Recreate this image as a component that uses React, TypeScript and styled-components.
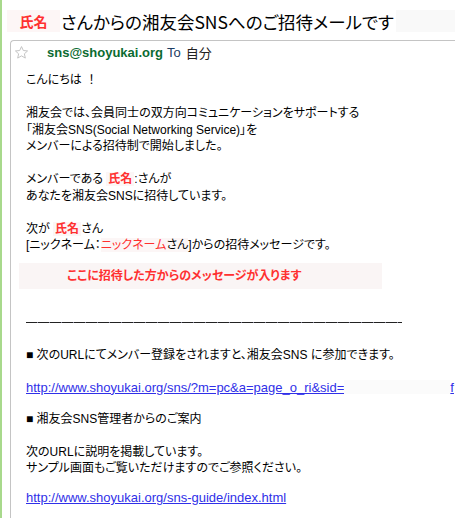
import React, { FC } from 'react';
import styled, { createGlobalStyle } from 'styled-components';

// === global === //
const GlobalStyle = createGlobalStyle`
  html, body { margin: 0; padding: 0; background: #fff; }
  body {
    font-family: "Liberation Sans", "Noto Sans CJK JP", sans-serif;
    font-feature-settings: "palt";
    color: #000;
  }
`;

const RED = '#ff3030';

// === star icon === //
const Star: FC = () => (
  <svg width="15" height="15" viewBox="0 0 24 24">
    <path
      d="M12 2.5l2.9 6.3 6.8.7-5.1 4.6 1.5 6.8L12 17.4l-6.1 3.5 1.5-6.8L2.3 9.5l6.8-.7z"
      fill="#fff"
      stroke="#c4c4c4"
      strokeWidth="1.6"
      strokeLinejoin="round"
    />
  </svg>
);

// === App === //
const App: FC = () => {
  return (
    <Page>
      <GlobalStyle />
      <GreenBar />
      <Main>
        <TitleRow>
          <NameLabel>氏名</NameLabel>
          <TitleText>さんからの湘友会SNSへのご招待メールです</TitleText>
          <TitleBlank />
        </TitleRow>

        <Card>
          <MailHead>
            <StarBox><Star /></StarBox>
            <Sender>sns@shoyukai.org</Sender>
            <ToLabel>To</ToLabel>
            <Me>自分</Me>
          </MailHead>

          <MailBody>
            <Para>こんにちは&nbsp;&nbsp;！</Para>
            <Para>
              湘友会では、会員同士の双方向コミュニケーションをサポートする<br />
              「湘友会SNS(Social Networking Service)」を<br />
              メンバーによる招待制で開始しました。
            </Para>
            <Para>
              メンバーである <Name>氏名</Name>:さんが<br />
              あなたを湘友会SNSに招待しています。
            </Para>
            <Para $gap={0}>
              次が <Name>氏名</Name>さん<br />
              [ニックネーム：<Hl><NameInline>ニックネーム</NameInline>さん</Hl>]からの招待メッセージです。
            </Para>

            <MessageBox>ここに招待した方からのメッセージが入ります</MessageBox>

            <Rule><RuleLine /></Rule>

            <Para>■ 次のURLにてメンバー登録をされますと、湘友会SNS に参加できます。</Para>
            <LinkLine $gap={14.5}>
              <Url href="#">
                http://www.shoyukai.org/sns/?m=pc&amp;a=page_o_ri&amp;sid=<Masked />f
              </Url>
            </LinkLine>
            <Para>■ 湘友会SNS管理者からのご案内</Para>
            <Para $gap={13.5}>
              次のURLに説明を掲載しています。<br />
              サンプル画面もご覧いただけますのでご参照ください。
            </Para>
            <LinkLine $gap={0}>
              <Url href="#">http://www.shoyukai.org/sns-guide/index.html</Url>
            </LinkLine>
          </MailBody>
        </Card>
      </Main>
    </Page>
  );
};

// === style === //
const Page = styled.div`
  display: flex;
  width: 455px;
  height: 518px;
  overflow: hidden;
`;

const GreenBar = styled.div`
  flex: 0 0 2px;
  background: #a8d98c;
`;

const Main = styled.div`
  flex: 1;
  min-width: 0;
  padding-top: 10px;
`;

const TitleRow = styled.div`
  display: flex;
  align-items: stretch;
  height: 22px;
  margin-left: 5px;
`;

const NameLabel = styled.div`
  flex: 0 0 53px;
  display: flex;
  align-items: center;
  justify-content: center;
  background: #fdf6f6;
  color: ${RED};
  font-size: 14px;
  font-weight: 700;
  font-family: "Noto Sans CJK JP", sans-serif;
`;

const TitleText = styled.div`
  flex: 0 0 335px;
  display: flex;
  align-items: center;
  padding-left: 1px;
  font-size: 17.5px;
  font-family: "Noto Sans CJK JP", sans-serif;
  white-space: nowrap;
  overflow: hidden;
`;

const TitleBlank = styled.div`
  flex: 1;
  background: #f9f9f9;
`;

const Card = styled.div`
  margin: 8px 0 0 8px;
  border-left: 1px solid #c4c4c4;
  border-top: 1px solid #c4c4c4;
  border-top-left-radius: 4px;
  height: 600px;
`;

const MailHead = styled.div`
  display: flex;
  align-items: center;
  height: 18px;
  padding-top: 2px;
  font-size: 13px;
`;

const StarBox = styled.div`
  flex: 0 0 33px;
  padding-left: 3px;
  display: flex;
  align-items: center;
`;

const Sender = styled.span`
  font-weight: 700;
  color: #0b6b31;
  margin-right: 4px;
`;

const ToLabel = styled.span`
  color: #1c3d63;
  margin-right: 5px;
`;

const Me = styled.span`
  color: #222;
  font-family: "Noto Sans CJK JP", sans-serif;
`;

const MailBody = styled.div`
  padding: 11px 0 0 15px;
  font-size: 12px;
  line-height: 16.5px;
  font-family: "Liberation Sans", "Noto Sans CJK JP", sans-serif;
  white-space: nowrap;
`;

const Para = styled.p<{ $gap?: number }>`
  margin: 0 0 ${(p) => (p.$gap ?? 16.5)}px;
`;

const Hl = styled.span`
  background: #fcf6f6;
`;

const Name = styled.span`
  color: ${RED};
  font-weight: 700;
  background: #fcf6f6;
  padding: 0 2px;
`;

const NameInline = styled.span`
  color: ${RED};
`;

const MessageBox = styled.div`
  margin: 9.5px 0 0 -7px;
  width: 363px;
  height: 26px;
  box-sizing: border-box;
  padding-left: 48px;
  display: flex;
  align-items: center;
  background: #faf5f5;
  color: ${RED};
  font-weight: 700;
`;

const Rule = styled.div`
  height: 16.5px;
  margin: 25.5px 0 15.5px;
  display: flex;
  align-items: center;
`;

const RuleLine = styled.div`
  width: 376px;
  height: 1px;
  background: repeating-linear-gradient(
    to right,
    #222 0,
    #222 11px,
    #8a8aa0 11px,
    #8a8aa0 12px
  );
`;

const LinkLine = styled.div<{ $gap: number }>`
  margin-bottom: ${(p) => p.$gap}px;
  font-size: 13px;
`;

const Url = styled.a`
  color: #3030e8;
  text-decoration: underline;
`;

const Masked = styled.span`
  display: inline-block;
  width: 106px;
  height: 14px;
  vertical-align: -2px;
  background: #fbfbfb;
`;

export default App;
